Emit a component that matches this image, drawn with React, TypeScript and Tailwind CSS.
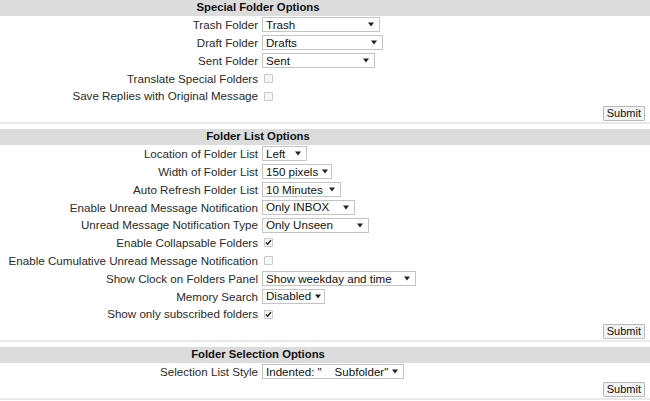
// Folder preferences page — three option sections, label/value rows, Submit per section

type Field =
  | { kind: 'select'; label: string; value: string; width: number }
  | { kind: 'check'; label: string; checked: boolean };

type Section = { title: string; fields: Field[] };

const SECTIONS: Section[] = [
  {
    title: 'Special Folder Options',
    fields: [
      { kind: 'select', label: 'Trash Folder', value: 'Trash', width: 118 },
      { kind: 'select', label: 'Draft Folder', value: 'Drafts', width: 121 },
      { kind: 'select', label: 'Sent Folder', value: 'Sent', width: 113 },
      { kind: 'check', label: 'Translate Special Folders', checked: false },
      { kind: 'check', label: 'Save Replies with Original Message', checked: false },
    ],
  },
  {
    title: 'Folder List Options',
    fields: [
      { kind: 'select', label: 'Location of Folder List', value: 'Left', width: 45 },
      { kind: 'select', label: 'Width of Folder List', value: '150 pixels', width: 70 },
      { kind: 'select', label: 'Auto Refresh Folder List', value: '10 Minutes', width: 79 },
      { kind: 'select', label: 'Enable Unread Message Notification', value: 'Only INBOX', width: 93 },
      { kind: 'select', label: 'Unread Message Notification Type', value: 'Only Unseen', width: 107 },
      { kind: 'check', label: 'Enable Collapsable Folders', checked: true },
      { kind: 'check', label: 'Enable Cumulative Unread Message Notification', checked: false },
      { kind: 'select', label: 'Show Clock on Folders Panel', value: 'Show weekday and time', width: 154 },
      { kind: 'select', label: 'Memory Search', value: 'Disabled', width: 63 },
      { kind: 'check', label: 'Show only subscribed folders', checked: true },
    ],
  },
  {
    title: 'Folder Selection Options',
    fields: [
      {
        kind: 'select',
        label: 'Selection List Style',
        value: 'Indented: "\u00a0\u00a0\u00a0\u00a0Subfolder"',
        width: 142,
      },
    ],
  },
];

const FakeSelect = ({ value, width }: { value: string; width: number }) => (
  <div
    className="h-[15px] flex items-center justify-between bg-white border border-[#c4c4c4] pl-[3px] pr-[5px] text-[11.6px] leading-none text-[#111] whitespace-nowrap"
    style={{ width }}
  >
    <span>{value}</span>
    <svg width="6" height="5" viewBox="0 0 6 5" className="ml-[4px] shrink-0">
      <path d="M0 0.5h6L3 4.5z" fill="#222" />
    </svg>
  </div>
);

const FakeCheck = ({ checked }: { checked: boolean }) => (
  <div className="ml-[2px] w-[9px] h-[9px] flex items-center justify-center border border-[#c8c8c8] bg-[#f6f6f6] rounded-[1px]">
    {checked && (
      <svg width="7" height="7" viewBox="0 0 7 7">
        <path d="M1 3.6l1.6 1.7L6 1.3" stroke="#222" strokeWidth="1.4" fill="none" />
      </svg>
    )}
  </div>
);

const SubmitButton = () => (
  <button className="h-[15px] px-[3px] text-[11px] leading-none text-[#111] bg-[#f3f3f3] border border-[#b9b9b9] rounded-[1px] font-[inherit]">
    Submit
  </button>
);

const OptionSection = ({ section }: { section: Section }) => (
  <div className="mb-[5px]">
    {/* 회색 헤더 바 */}
    <div className="h-[16px] bg-[#dcdcdc] flex items-center">
      <div className="w-[516px] text-center text-[11.3px] font-bold text-[#111] leading-none">
        {section.title}
      </div>
    </div>

    {section.fields.map((f) => (
      <div key={f.label} className="h-[17.8px] flex items-center">
        <div className="w-[258px] text-right text-[11.6px] text-[#2a2a2a] whitespace-nowrap">
          {f.label}
        </div>
        <div className="ml-[4px] flex items-center">
          {f.kind === 'select' ? (
            <FakeSelect value={f.value} width={f.width} />
          ) : (
            <FakeCheck checked={f.checked} />
          )}
        </div>
      </div>
    ))}

    <div className="h-[17px] flex items-center justify-end pr-[5px]">
      <SubmitButton />
    </div>
    <div className="h-[2px] bg-[#e9e9e9]" />
  </div>
);

const App = () => (
  <div className="w-[650px] h-[401px] overflow-hidden bg-white font-['Liberation_Sans',Arial,sans-serif]">
    {SECTIONS.map((s) => (
      <OptionSection key={s.title} section={s} />
    ))}
  </div>
);

export default App;
